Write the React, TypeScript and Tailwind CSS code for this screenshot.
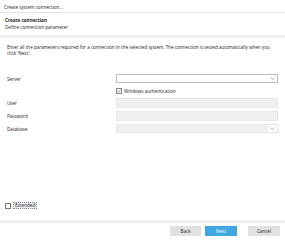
import React from "react";

const Chevron = () => (
  <svg width="5" height="3" viewBox="0 0 5 3" className="shrink-0">
    <path d="M0.5 0.5 L2.5 2.5 L4.5 0.5" fill="none" stroke="#8a8a8a" strokeWidth="0.7" />
  </svg>
);

export default function App() {
  return (
    <div
      className="w-[285px] h-[240px] bg-white flex flex-col text-[#222] text-[4.6px] leading-[6px] overflow-hidden"
      style={{ fontFamily: '"Open Sans", "Noto Sans", sans-serif' }}
    >
      <div className="h-[13px] shrink-0 px-[4px] pt-[1px] flex items-center border-b border-[#e6e6e6]">
        Create system connection...
      </div>
      <div className="h-[22px] shrink-0 px-[5px] pt-[4px] flex flex-col gap-[1px]">
        <div className="font-bold">Create connection</div>
        <div>Define connection parameter</div>
      </div>
      <div className="h-[3px] shrink-0 bg-[#efefef]" />
      <div className="px-[7px] pt-[6px] h-[36px] shrink-0">
        Enter all the parameters required for a connection in the selected system. The connection is tested automatically when you
        click 'Next'.
      </div>
      <div className="grid grid-cols-[109px_162px] pl-[7px] gap-y-[3px] items-center">
        <div>Server</div>
        <div className="h-[9px] border border-[#bdbdbd] bg-white flex items-center justify-end pr-[2px]">
          <Chevron />
        </div>
        <div />
        <div className="h-[9px] flex items-center gap-[2px]">
          <div className="w-[6px] h-[6px] border border-[#8a8a8a] bg-white flex items-center justify-center overflow-visible">
            <svg width="4" height="4" viewBox="0 0 4 4" className="shrink-0">
              <path d="M0.4 2 L1.5 3.1 L3.6 0.6" fill="none" stroke="#444" strokeWidth="0.6" />
            </svg>
          </div>
          <span>Windows authentication</span>
        </div>
        <div>User</div>
        <div className="h-[10px] border border-[#e6e6e6] bg-[#f0f0f0]" />
        <div>Password</div>
        <div className="h-[10px] border border-[#e6e6e6] bg-[#f0f0f0]" />
        <div>Database</div>
        <div className="h-[9px] border border-[#e6e6e6] bg-[#f0f0f0] flex items-center justify-end">
          <div className="w-[9px] h-full bg-white flex items-center justify-center">
            <Chevron />
          </div>
        </div>
      </div>
      <div className="flex-1" />
      <div className="px-[5px] flex items-center gap-[2px] h-[7px] shrink-0">
        <div className="w-[6px] h-[6px] border border-[#7a7a7a] bg-white" />
        <span className="border border-dotted border-[#888] bg-[#eef0f7] px-[1px] leading-[5px]">Extended</span>
      </div>
      <div className="h-[11px] shrink-0" />
      <div className="h-[3px] shrink-0 bg-[#efefef]" />
      <div className="h-[17px] shrink-0 flex items-start justify-end pt-[3px] pr-[5px] gap-[4px]">
        <div className="w-[31px] h-[10px] bg-[#e1e1e1] flex items-center justify-center">Back</div>
        <div className="w-[32px] h-[10px] bg-[#3fa6e0] text-white flex items-center justify-center">Next</div>
        <div className="w-[3px]" />
        <div className="w-[32px] h-[10px] bg-[#e1e1e1] flex items-center justify-center">Cancel</div>
      </div>
    </div>
  );
}
